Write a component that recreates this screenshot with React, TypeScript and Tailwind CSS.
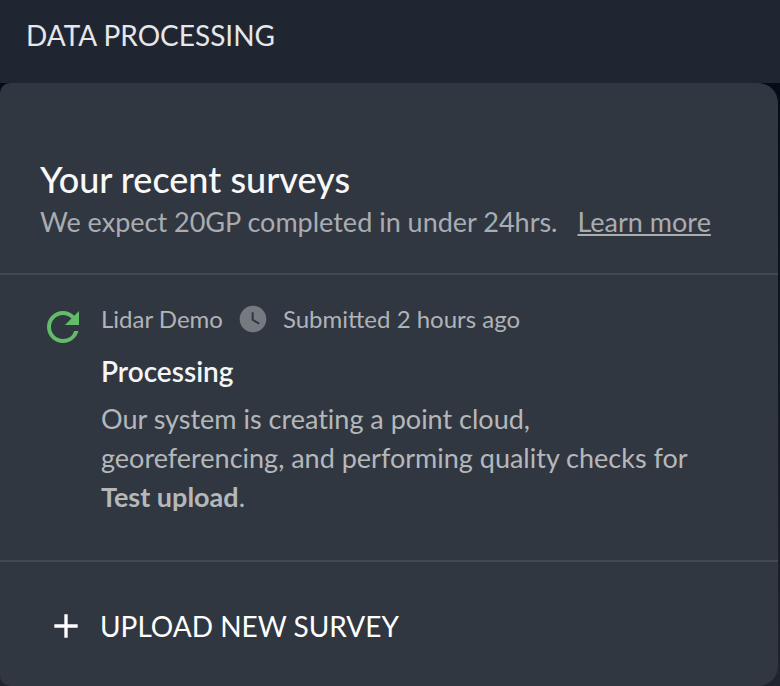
import type { ReactNode } from "react";
import { MdAdd, MdRefresh, MdWatchLater } from "react-icons/md";

type Survey = {
  id: string;
  project: string;
  submitted: string;
  status: string;
  message: ReactNode;
};

const SURVEYS: Survey[] = [
  {
    id: "test-upload",
    project: "Lidar Demo",
    submitted: "Submitted 2 hours ago",
    status: "Processing",
    message: (
      <>
        Our system is creating a point cloud, georeferencing, and performing quality checks for{" "}
        <strong className="font-bold">Test upload</strong>.
      </>
    ),
  },
];

function SurveyItem({ survey }: { survey: Survey }) {
  return (
    <li className="flex gap-3.5 pt-7 pr-[72px] pb-11 pl-10 border-b-2 border-[#424953]">
      <MdRefresh className="w-12 h-12 -ml-px shrink-0 text-[#62bd69]" />
      <div className="min-w-0">
        <div className="flex items-center gap-3.5 text-2xl leading-7 text-[#b0b3b7]">
          <span>{survey.project}</span>
          <MdWatchLater className="w-8 h-8 shrink-0 text-[#757a81]" />
          <span>{survey.submitted}</span>
        </div>
        <h3 className="mt-4 text-[28px] leading-10 font-semibold text-[#f4f5f6]">{survey.status}</h3>
        <p className="mt-2 text-[27px] leading-[39px] text-[#b5b8bb] [font-variant-ligatures:none]">
          {survey.message}
        </p>
      </div>
    </li>
  );
}

export default function App() {
  return (
    <div className="min-h-screen flex flex-col bg-linear-to-b from-[#030913] to-[#20242e] font-['Lato','Nunito',sans-serif]">
      <header className="px-[26px] pt-4 pb-7 bg-[#202631]">
        <h1 className="text-[28px] leading-[39px] text-[#e6e7e9]">DATA PROCESSING</h1>
      </header>

      <main className="flex-1 flex flex-col mr-0.5 rounded-l-[10px] rounded-r-[20px] bg-[#313741]">
        <div className="px-10 pt-[76px] pb-8 border-b-2 border-[#424953]">
          <h2 className="text-4xl leading-10 font-medium text-[#f8f8f9]">Your recent surveys</h2>
          <p className="mt-[3px] text-[27px] leading-[39px] text-[#a9adb1]">
            We expect 20GP completed in under 24hrs.
            <a href="#learn-more" className="ml-5 underline decoration-2 underline-offset-2">
              Learn more
            </a>
          </p>
        </div>

        <ul>
          {SURVEYS.map(survey => (
            <SurveyItem key={survey.id} survey={survey} />
          ))}
        </ul>

        <button type="button" className="flex items-center gap-3.5 px-[46px] pt-11 pb-9 text-left text-white">
          <MdAdd className="w-10 h-10 shrink-0" />
          <span className="text-[28px] leading-[39px]">UPLOAD NEW SURVEY</span>
        </button>
      </main>
    </div>
  );
}
